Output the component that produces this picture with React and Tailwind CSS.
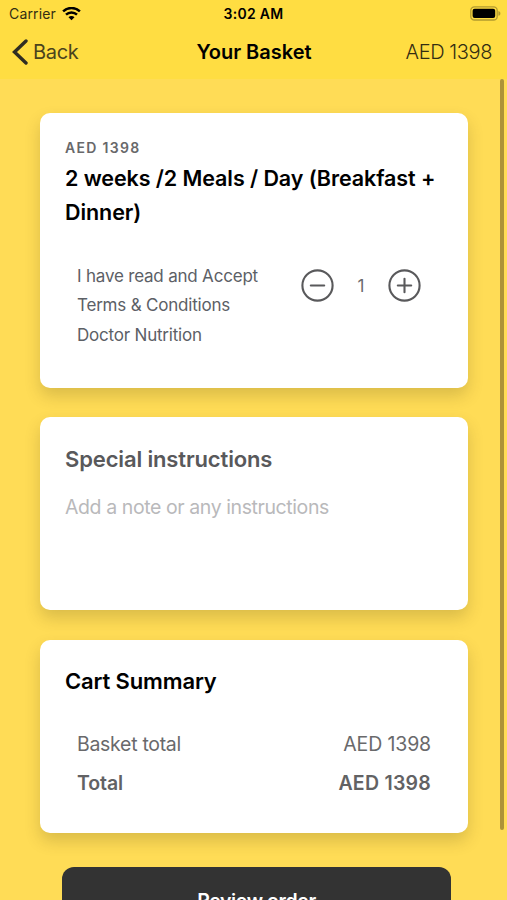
import React, { useState } from 'react';

const PRICE = 1398;

function StatusBar() {
  return (
    <div className="grid h-7 grid-cols-3 items-center pr-[6px] pl-[9px] text-black">
      <div className="-mt-px flex items-center gap-[6px]">
        <span className="text-[14px] tracking-[0.15px] text-[#332d12]">Carrier</span>
        <svg width="19" height="14" viewBox="0 0 19 14" fill="none" stroke="currentColor" strokeWidth="2.4">
          <path d="M1.1 4.4a12 12 0 0 1 16.8 0" />
          <path d="M4 7.7a7.8 7.8 0 0 1 11 0" />
          <path d="M9.5 13.2 6.5 10.2a4.2 4.2 0 0 1 6 0Z" fill="currentColor" stroke="none" />
        </svg>
      </div>
      <span className="-mt-px -ml-[3px] text-center text-[14px] font-semibold tracking-[0.3px] whitespace-nowrap">3:02 AM</span>
      <svg className="-mt-[2px] justify-self-end" width="31" height="15" viewBox="0 0 31 15">
        <rect x="0.8" y="0.8" width="26.4" height="13.2" rx="3.6" fill="none" stroke="#b39b2f" strokeWidth="1.3" />
        <rect x="2.6" y="2.7" width="22.6" height="9.4" rx="2" fill="#000" />
        <path d="M28.4 5v4.8c1.4-.5 2-1.3 2-2.4s-.6-1.9-2-2.4Z" fill="#b39b2f" />
      </svg>
    </div>
  );
}

function NavBar({ total }) {
  return (
    <div className="grid h-[51px] grid-cols-3 items-center pr-[15px] pb-[3px] pl-3 text-[20px]">
      <button className="flex items-center gap-[5px] text-[#4b431d]">
        <svg width="16" height="26" viewBox="0 0 16 26" fill="none" stroke="#302d22" strokeWidth="3.4" strokeLinecap="round">
          <path d="M14 2 2.5 13 14 24" />
        </svg>
        <span className="tracking-[-0.3px]">Back</span>
      </button>
      <h1 className="ml-[4px] text-center font-semibold tracking-[0px] whitespace-nowrap text-black">Your Basket</h1>
      <span className="text-right font-light tracking-[-0.4px] text-[#332d12]">AED {total}</span>
    </div>
  );
}

function Card({ className, children }) {
  return (
    <section className={`rounded-[10px] bg-white px-[25px] shadow-[0_8px_16px_rgba(70,60,20,0.2)] ${className}`}>
      {children}
    </section>
  );
}

function RoundButton({ plus, label, onClick }) {
  return (
    <button aria-label={label} onClick={onClick} className="cursor-pointer text-[#59595b]">
      <svg width="33" height="33" viewBox="0 0 33 33" fill="none" stroke="currentColor" strokeWidth="2.1" strokeLinecap="round">
        <circle cx="16.5" cy="16.5" r="15.1" />
        <path d="M9.8 16.5h13.4" />
        {plus && <path d="M16.5 9.8v13.4" />}
      </svg>
    </button>
  );
}

export default function App() {
  const [quantity, setQuantity] = useState(1);
  const [note, setNote] = useState('');
  const total = PRICE * quantity;

  return (
    <div className="relative flex h-[900px] w-[507px] flex-col overflow-hidden bg-[#ffdc56] font-['Inter',sans-serif]">
      <header className="shrink-0 bg-[#ffdd42]">
        <StatusBar />
        <NavBar total={total} />
      </header>

      <main className="flex flex-col pt-[34px] pr-[39px] pl-10">
        <Card className="h-[275px] shrink-0 pt-[26px]">
          <p className="text-[14px] leading-[18px] font-semibold tracking-[1.3px] text-[#68686a]">AED {PRICE}</p>
          <h2 className="mt-[4px] text-[21.5px] leading-[34px] font-semibold tracking-[-0.08px] whitespace-nowrap text-black">
            2 weeks /2 Meals / Day (Breakfast +<br />Dinner)
          </h2>
          <div className="mt-[32px] flex justify-between pr-[22px] pl-3">
            <p className="mt-px text-[17px] leading-[29.4px] tracking-[-0.2px] whitespace-nowrap text-[#5c6066]">
              I have read and Accept<br />Terms &amp; Conditions<br />Doctor Nutrition
            </p>
            <div className="mt-[8px] flex h-[33px] w-[120px] items-center justify-between">
              <RoundButton label="Remove one" onClick={() => setQuantity(Math.max(1, quantity - 1))} />
              <span className="mt-[2px] text-[17px] text-[#6b6b6d]">{quantity}</span>
              <RoundButton plus label="Add one" onClick={() => setQuantity(quantity + 1)} />
            </div>
          </div>
        </Card>

        <Card className="mt-[29px] h-[193px] shrink-0 pt-[26px]">
          <h2 className="text-[22px] leading-8 font-semibold tracking-[-0.14px] text-[#59595b]">Special instructions</h2>
          <textarea
            value={note}
            onChange={e => setNote(e.target.value)}
            placeholder="Add a note or any instructions"
            className="mt-[18px] block h-[90px] w-full resize-none text-[19.5px] leading-7 tracking-[-0.41px] text-[#59595b] outline-none placeholder:text-[#b9b9bb]"
          />
        </Card>

        <Card className="mt-[30px] h-[193px] shrink-0 pt-[25px]">
          <h2 className="text-[22px] leading-8 font-semibold tracking-[-0.14px] text-black">Cart Summary</h2>
          <div className="mt-[28px] pr-3 pl-3 text-[19.5px] leading-[39px] tracking-[-0.3px] text-[#69696b]">
            <div className="flex justify-between">
              <span>Basket total</span>
              <span className="tracking-[-0.15px]">AED {total}</span>
            </div>
            <div className="flex justify-between font-semibold text-[#626264]">
              <span className="tracking-[-0.1px]">Total</span>
              <span className="tracking-[0.25px]">AED {total}</span>
            </div>
          </div>
        </Card>

        <button className="mt-[34px] mr-[17px] ml-[22px] h-[70px] shrink-0 rounded-xl bg-[#333] text-[19.5px] font-semibold tracking-[-0.4px] text-white">
          Review order
        </button>
      </main>

      {/* Scroll indicator */}
      <div className="absolute top-[79px] right-[3px] h-[751px] w-1 rounded-full bg-[#ad9338]" />
    </div>
  );
}
